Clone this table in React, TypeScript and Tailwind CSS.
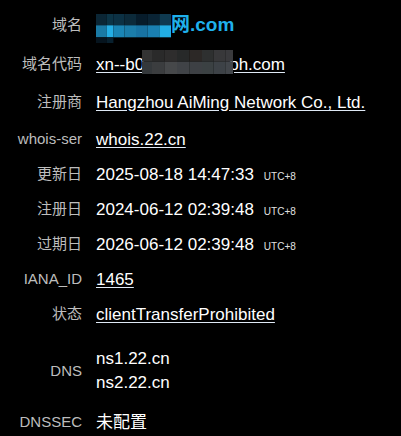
import React from "react";

const font = { fontFamily: '"Liberation Sans", Arial, "Noto Sans CJK SC", sans-serif' };

// pixelated blocks hiding parts of the domain
const mosaicTop = {
  cols: [0, 10.7, 17.4, 28.4, 40, 51.7, 63.4, 75],
  rows: [
    { y: 0, h: 11.3, c: ["#0b2635", "#0c3446", "#0c3144", "#0c2a3a", "#071c2b", "#0a2435", "#0f3a50"] },
    { y: 11.3, h: 12, c: ["#1a7aa5", "#24aee5", "#1a85b5", "#1b7daa", "#1873a3", "#1a80b2", "#22aee4"] },
    { y: 23.3, h: 5.7, c: ["#06141e", "#08202e"] },
  ],
};

const mosaicCode = {
  cols: [0, 10, 22.3, 35, 47.3, 60, 71.7, 83.3, 91],
  rows: [
    { y: 0, h: 11.7, c: ["#333333", "#2a2a2a", "#2e2d2d", "#272929", "#2c2826", "#2e3030", "#38383a", "#3a3a3d"] },
    { y: 11.7, h: 12.3, c: ["#34383b", "#3b3d3f", "#46484a", "#404347", "#3d4044", "#3b4143", "#3d4247", "#42464b"] },
  ],
};

type Mosaic = typeof mosaicTop;

const Pixels = ({ m, w, h }: { m: Mosaic; w: number; h: number }) => (
  <svg width={w} height={h} viewBox={`0 0 ${w} ${h}`} className="block">
    {m.rows.map((r, ri) =>
      r.c.map((c, ci) => (
        <rect key={`${ri}-${ci}`} x={m.cols[ci]} y={r.y} width={m.cols[ci + 1] - m.cols[ci]} height={r.h} fill={c} />
      ))
    )}
  </svg>
);

const Row = ({ label, children, className = "h-[35px]" }: { label: string; children: React.ReactNode; className?: string }) => (
  <div className={`flex items-center ${className}`}>
    <div className="w-[82px] shrink-0 text-right text-[15px] text-[#bdbdbd]">{label}</div>
    <div className="ml-[14px] text-[17px] text-white">{children}</div>
  </div>
);

const Utc = () => <span className="ml-[10px] text-[10px] text-[#e0e0e0]">UTC+8</span>;

const Link = ({ children }: { children: React.ReactNode }) => (
  <a className="underline decoration-[#dfe9f5] underline-offset-[2px]">{children}</a>
);

export default function App() {
  return (
    <div className="min-h-[436px] w-[401px] overflow-hidden bg-black pt-[8px]" style={font}>
      <Row label="域名">
        <div className="flex items-center">
          <div className="mt-[5px]">
            <Pixels m={mosaicTop} w={75} h={29} />
          </div>
          <span className="text-[19px] font-bold text-[#1fb0ec]">网.com</span>
        </div>
      </Row>
      <Row label="域名代码" className="mt-[4px] h-[35px]">
        <span className="relative">
          <Link>
            xn--b0<span className="inline-block w-[85px]" />ph.com
          </Link>
          <span className="absolute left-[46px] top-[-5px]">
            <Pixels m={mosaicCode} w={91} h={24} />
          </span>
        </span>
      </Row>
      <Row label="注册商" className="mt-[3px] h-[35px]">
        <Link>Hangzhou AiMing Network Co., Ltd.</Link>
      </Row>
      <Row label="whois-ser" className="mt-[2px] h-[35px]">
        <Link>whois.22.cn</Link>
      </Row>
      <Row label="更新日">
        2025-08-18 14:47:33
        <Utc />
      </Row>
      <Row label="注册日">
        2024-06-12 02:39:48
        <Utc />
      </Row>
      <Row label="过期日">
        2026-06-12 02:39:48
        <Utc />
      </Row>
      <Row label="IANA_ID">
        <Link>1465</Link>
      </Row>
      <Row label="状态">
        <Link>clientTransferProhibited</Link>
      </Row>
      <Row label="DNS" className="mt-[15px]">
        <div className="leading-[24px]">
          <div>ns1.22.cn</div>
          <div>ns2.22.cn</div>
        </div>
      </Row>
      <Row label="DNSSEC" className="mt-[10px] h-[35px]">
        未配置
      </Row>
    </div>
  );
}
